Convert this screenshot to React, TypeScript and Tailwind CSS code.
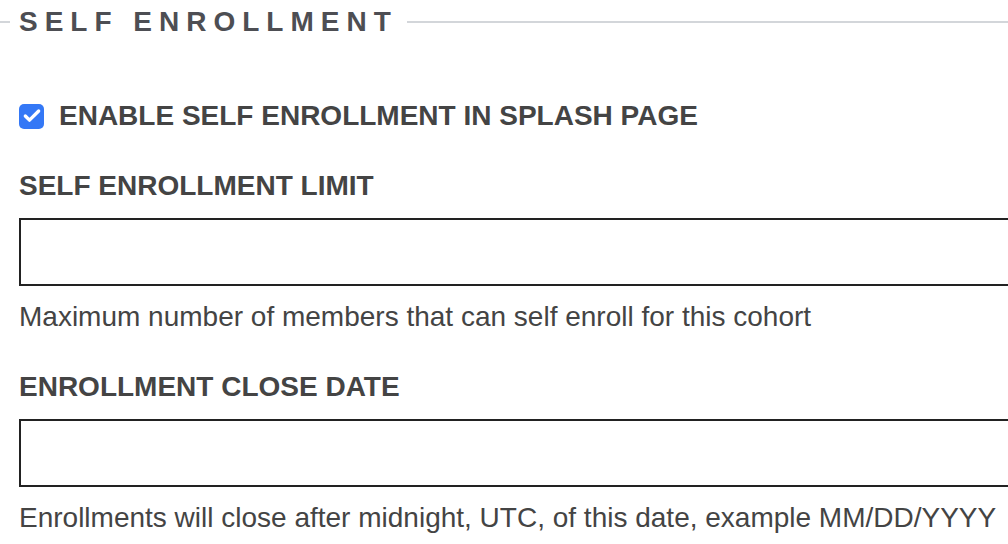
import { Check } from "lucide-react";

function Field({ label, help }: { label: string; help: string }) {
  return (
    <div className="flex flex-col">
      <label className="text-[28px] font-bold leading-[32px] text-[#444444]">{label}</label>
      <div className="mt-[16px] h-[68px] w-[1040px] border-2 border-[#222222] bg-white" />
      <p className="mt-[15px] whitespace-nowrap text-[28px] leading-[32px] text-[#444444]">{help}</p>
    </div>
  );
}

export default function App() {
  return (
    <div className="h-[544px] w-[1008px] overflow-hidden bg-white font-['Liberation_Sans',Arial,sans-serif]">
      <div className="flex items-center pt-[6px]">
        <div className="h-[2px] w-[10px] bg-[#d3d6da]" />
        <h2 className="px-[9px] text-[28px] font-bold leading-[32px] tracking-[7px] text-[#4d4e53]">
          SELF ENROLLMENT
        </h2>
        <div className="h-[2px] flex-1 bg-[#d3d6da]" />
      </div>

      <div className="flex flex-col gap-[38px] px-[19px] pt-[62px]">
        <label className="flex items-center gap-[15px]">
          <span className="flex h-[25px] w-[25px] items-center justify-center rounded-[5px] bg-[#3478f6]">
            <Check className="h-[20px] w-[20px] text-white" strokeWidth={4} />
          </span>
          <span className="text-[28px] font-bold leading-[32px] text-[#444444]">
            ENABLE SELF ENROLLMENT IN SPLASH PAGE
          </span>
        </label>

        <Field
          label="SELF ENROLLMENT LIMIT"
          help="Maximum number of members that can self enroll for this cohort"
        />
        <Field
          label="ENROLLMENT CLOSE DATE"
          help="Enrollments will close after midnight, UTC, of this date, example MM/DD/YYYY"
        />
      </div>
    </div>
  );
}
